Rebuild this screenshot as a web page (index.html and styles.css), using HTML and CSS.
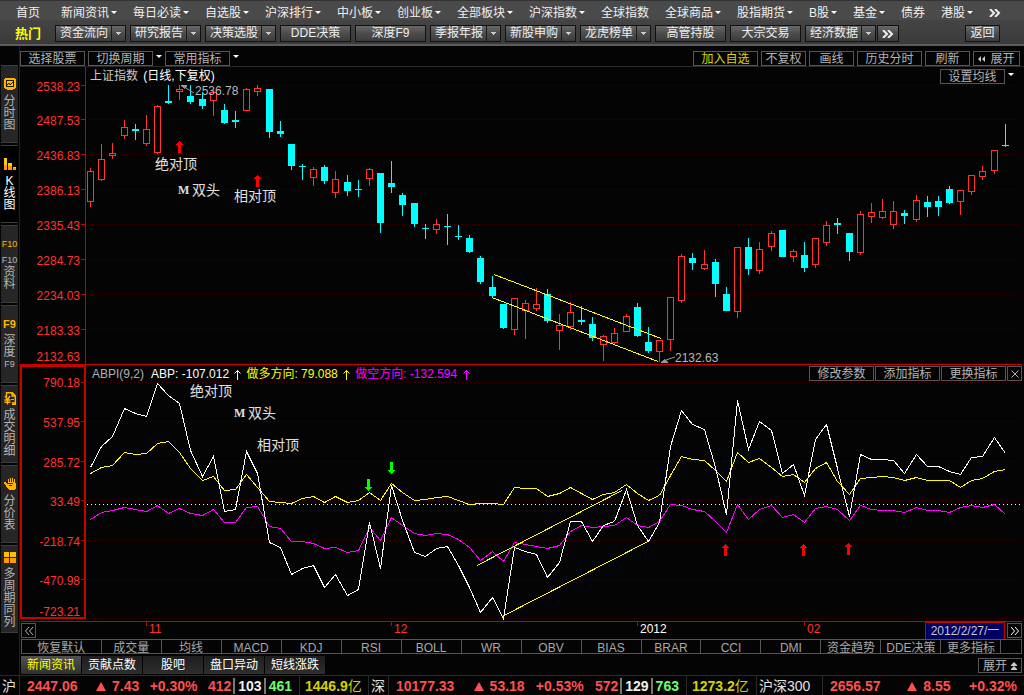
FILE: index.html
```html
<!DOCTYPE html>
<html lang="zh-CN">
<head>
<meta charset="utf-8">
<meta name="viewport" content="width=device-width, initial-scale=1">
<title>上证指数 K线图</title>
<link rel="stylesheet" href="styles.css">
</head>
<body>
<nav class="menu" aria-label="主菜单">
  <a class="menu-home" href="#">首页</a>
  <a class="drop" href="#">新闻资讯</a>
  <a class="drop" href="#">每日必读</a>
  <a class="drop" href="#">自选股</a>
  <a class="drop" href="#">沪深排行</a>
  <a class="drop" href="#">中小板</a>
  <a class="drop" href="#">创业板</a>
  <a class="drop" href="#">全部板块</a>
  <a class="drop" href="#">沪深指数</a>
  <a href="#">全球指数</a>
  <a class="drop" href="#">全球商品</a>
  <a class="drop" href="#">股指期货</a>
  <a class="drop" href="#">B股</a>
  <a class="drop" href="#">基金</a>
  <a href="#">债券</a>
  <a class="drop" href="#">港股</a>
  <a href="#" aria-label="更多菜单"><svg class="more" viewBox="0 0 12 8"><path d="M1 0l4 4-4 4M6 0l4 4-4 4"/></svg></a>
</nav>

<div class="hot">
  <strong class="hot-title">热门</strong>
  <button class="hot-btn split">资金流向</button>
  <button class="hot-btn split">研究报告</button>
  <button class="hot-btn split">决策选股</button>
  <button class="hot-btn">DDE决策</button>
  <button class="hot-btn">深度F9</button>
  <button class="hot-btn split">季报年报</button>
  <button class="hot-btn split">新股申购</button>
  <button class="hot-btn split">龙虎榜单</button>
  <button class="hot-btn">高管持股</button>
  <button class="hot-btn">大宗交易</button>
  <span class="hot-group">
    <button class="hot-btn split">经济数据</button>
    <button class="hot-btn hot-small" aria-label="更多"><svg class="more" viewBox="0 0 12 8"><path d="M1 0l4 4-4 4M6 0l4 4-4 4"/></svg></button>
  </span>
  <button class="hot-btn hot-back">返回</button>
</div>

<div class="body">
  <nav class="side" aria-label="视图">
    <a href="#" class="side-item">
      <svg class="ico" viewBox="0 0 12 13"><path fill="#ffb400" d="M1 0h10v1h1v9h-1v1H9v1H3v-1H1v-1H0V1h1z"/><path fill="#221800" d="M2 2h8v7H2z"/><path fill="#ffc400" d="M3 3h6v5H3z"/><path d="M3 7l2-2 1 2 3-3" fill="none" stroke="#221800"/></svg>
      <span>分时图</span>
    </a>
    <a href="#" class="side-item active" aria-current="page">
      <svg class="ico" viewBox="0 0 12 13"><path fill="#ffc800" d="M0 0h3v7H0zM4 5h4v3H4zM9 9h3v1H9z"/><path fill="#ff9600" d="M0 7h3v5H0zM4 8h4v4H4zM9 10h3v2H9z"/></svg>
      <span>K线图</span>
    </a>
    <a href="#" class="side-item">
      <b class="glyph f10">F10</b>
      <span><i>F10</i>资料</span>
    </a>
    <a href="#" class="side-item">
      <b class="glyph">F9</b>
      <span>深度<i>F9</i></span>
    </a>
    <a href="#" class="side-item">
      <svg class="ico" viewBox="0 0 12 13"><path fill="none" stroke="#ffb400" stroke-width="1.4" d="M2.5 5V.7h5.8l3 3v8.6H8M8 1v3h3M1 4l2.5 3.5L6 4M3.5 7v5.5M.5 8h6M.5 10.3h6"/><path fill="#ff9a00" d="M7 7h3v1H7zM8 10h3v2H8z"/></svg>
      <span>成交明细</span>
    </a>
    <a href="#" class="side-item">
      <svg class="ico" viewBox="0 0 12 13"><path fill="#ffb000" d="M4 1h1v3h1V0h1v4h1V0h1v4h1V1h1v4h1v6h-1v1H5v-1H4v-1H3V9H2V7H1V6H0V4h2v1h1v1h1z"/><path fill="#4a2a00" d="M4 5h5v1H4zM5 7h3v1H5z"/></svg>
      <span>分价表</span>
    </a>
    <a href="#" class="side-item side-tall">
      <svg class="ico" viewBox="0 0 12 13"><path fill="#ffc000" d="M0 1h5v5H0zM6 1h6v5H6z"/><path fill="#ff9a00" d="M0 7h5v5H0zM6 7h6v5H6z"/></svg>
      <span>多周期同列</span>
    </a>
  </nav>

  <main class="main">
    <div class="tools">
      <button class="box w4">选择股票</button>
      <button class="box w4">切换周期</button><i class="caret"></i>
      <button class="box w4">常用指标</button><i class="caret"></i>
      <span class="tools-right">
        <button class="box w4 yellow">加入自选</button>
        <button class="box w2">不复权</button>
        <button class="box w2">画线</button>
        <button class="box w4">历史分时</button>
        <button class="box w2">刷新</button>
        <button class="box w3"><svg class="rew" viewBox="0 0 8 6"><path d="M3 0v6L0 3zM7 0v6L4 3z"/></svg>展开</button>
      </span>
    </div>

    <section class="panel price">
      <svg id="price" class="plot" viewBox="20 67 1004 298" role="img" aria-label="上证指数日线"></svg>
      <h1 class="title">上证指数 <span>(日线,下复权)</span></h1>
      <div class="panel-tools price-tools"><button class="box w4">设置均线</button><i class="caret"></i></div>
    </section>

    <section class="panel indicator">
      <svg id="indicator" class="plot" viewBox="20 365 1004 257" role="img" aria-label="ABPI 指标"></svg>
      <div class="legend"><span class="grey">ABPI(9,2)</span><span class="white">ABP: -107.012 <svg class="up" viewBox="0 0 7 11"><path d="M3.500 11V1M.5 4.500l3-3 3 3"/></svg></span><span class="lemon">做多方向: 79.088 <svg class="up" viewBox="0 0 7 11"><path d="M3.500 11V1M.5 4.500l3-3 3 3"/></svg></span><span class="pink">做空方向: -132.594 <svg class="up" viewBox="0 0 7 11"><path d="M3.500 11V1M.5 4.500l3-3 3 3"/></svg></span></div>
      <div class="panel-tools">
        <button class="box w4">修改参数</button>
        <button class="box w4">添加指标</button>
        <button class="box w4">更换指标</button>
        <button class="box w1" aria-label="关闭"><svg class="tiny" viewBox="0 0 8 8"><path d="M.5.5l7 7M7.500.5l-7 7"/></svg></button>
      </div>
    </section>

    <div class="timeline">
      <button class="box w1" aria-label="向前"><svg class="tiny" viewBox="0 0 8 8"><path d="M4 0L.5 4 4 8M8 0L4.500 4 8 8"/></svg></button>
      <svg id="dates" class="dates" viewBox="36 621 889 18" role="img" aria-label="日期"></svg>
      <time class="date" datetime="2012-02-27">2012/2/27/一</time>
      <button class="box w1 bright" aria-label="向后"><svg class="tiny" viewBox="0 0 8 8"><path d="M0 0l3.500 4L0 8M4 0l3.500 4L4 8"/></svg></button>
    </div>

    <div class="ind-tabs">
      <button class="first">恢复默认</button><button>成交量</button><button>均线</button><button>MACD</button><button>KDJ</button><button>RSI</button><button>BOLL</button><button>WR</button><button>OBV</button><button>BIAS</button><button>BRAR</button><button>CCI</button><button>DMI</button><button>资金趋势</button><button>DDE决策</button><button>更多指标</button>
    </div>

    <div class="news">
      <button class="tab on">新闻资讯</button>
      <button class="tab">贡献点数</button>
      <button class="tab">股吧</button>
      <button class="tab">盘口异动</button>
      <button class="tab">短线涨跌</button>
      <button class="box expand">展开<svg class="dbl" viewBox="0 0 6 8"><path d="M3 0l3 3H0zM3 4l3 3H0zM0 3h6v1H0zM0 7h6v1H0z"/></svg></button>
    </div>
  </main>
</div>

<footer class="status">
  <span class="name">沪</span>
  <span class="quote"><b class="wide">2447.06</b><b><i class="tri"></i>7.43</b><b>+0.30%</b><span class="counts"><b>412</b><b class="flat">103</b><b class="down">461</b></span></span>
  <span class="amount"><b>1446.9</b>亿</span>
  <span class="name">深</span>
  <span class="quote"><b class="wide">10177.33</b><b><i class="tri"></i>53.18</b><b>+0.53%</b><span class="counts"><b>572</b><b class="flat">129</b><b class="down">763</b></span></span>
  <span class="amount"><b>1273.2</b>亿</span>
  <span class="name">沪深300</span>
  <span class="quote"><b class="wide">2656.57</b><b><i class="tri"></i>8.55</b><b>+0.32%</b></span>
</footer>
<script src="chart.js"></script>
</body>
</html>
```

FILE: styles.css
```css
* { box-sizing: border-box; }

body {
  margin: 0;
  min-height: 100vh;
  display: flex;
  flex-direction: column;
  background: #040404;
  color: #c8c8c8;
  font: 12px/14px "Liberation Sans", "Noto Sans CJK SC", sans-serif;
}

a { color: inherit; text-decoration: none; }
i { font-style: normal; }

button {
  margin: 0;
  padding: 0;
  border: 0;
  background: none;
  color: inherit;
  font: inherit;
  white-space: nowrap;
  cursor: pointer;
}

/* top menu */
.menu {
  flex: none;
  display: flex;
  justify-content: space-between;
  align-items: center;
  height: 20px;
  padding: 4px 23px 0 16px;
  background: #4a4a4a;
  border-top: 1px solid #333;
  color: #f0f0f0;
  white-space: nowrap;
}
.menu-home { padding-right: 5px; }
.menu a.drop::after {
  content: "";
  display: inline-block;
  margin-left: 2px;
  vertical-align: 3px;
  border: 3px solid transparent;
  border-top-color: #fff;
  border-bottom: 0;
}
.more {
  display: inline-block;
  width: 12px;
  height: 8px;
  fill: none;
  stroke: #eee;
  stroke-width: 2;
}

/* shortcut bar */
.hot {
  flex: none;
  display: flex;
  align-items: center;
  gap: 4px;
  height: 26px;
  padding: 4px 24px 1px 15px;
  background: linear-gradient(#444, #3a3a3a);
  border-bottom: 2px solid #5c5c5c;
  color: #eee;
}
.hot-title { width: 36px; font-size: 13px; color: #ff0; }
.hot-btn {
  flex: none;
  display: flex;
  justify-content: center;
  width: 71px;
  height: 17px;
  border: 1px solid #111;
  background: linear-gradient(#686868, #4c4c4c 50%, #3c3c3c);
  line-height: 15px;
}
.hot-btn.split { justify-content: space-between; padding-left: 4px; }
.hot-btn.split::after {
  content: "";
  width: 13px;
  height: 15px;
  border-left: 1px solid #1c1c1c;
  background: linear-gradient(#ccc, #ccc) 4px 6px / 5px 1px no-repeat, linear-gradient(#ccc, #ccc) 5px 7px / 3px 1px no-repeat, linear-gradient(#ccc, #ccc) 6px 8px / 1px 1px no-repeat;
}
.hot-group { display: flex; gap: 1px; }
.hot-btn.hot-small { width: 22px; align-items: center; }
.hot-btn.hot-back { width: 35px; margin-left: auto; }

/* work area */
.body { flex: 1; display: flex; }

.side {
  flex: none;
  width: 20px;
  padding-top: 19px;
  border-right: 1px solid #222;
  display: flex;
  flex-direction: column;
  gap: 2px;
}
.side-item {
  display: flex;
  flex-direction: column;
  align-items: center;
  justify-content: center;
  gap: 4px;
  height: 78px;
  margin: 0 1px;
  border-top: 1px solid #3c3c3c;
  border-bottom: 1px solid #3c3c3c;
  background: #262626;
  color: #b4b4b4;
  line-height: 12px;
}
.side-tall { height: 88px; }
.side-item.active { background: #000; color: #fff; }
.side-item span { width: 14px; text-align: center; word-break: break-all; }
.side-item span i { display: block; font-size: 9px; line-height: 12px; margin: 0 -2px; word-break: normal; }
.ico { width: 12px; height: 13px; }
.glyph { font-size: 11px; color: #ffb400; }
.glyph.f10 { font-size: 9px; font-weight: 400; }

.main { flex: 1; min-width: 0; display: flex; flex-direction: column; }

/* outlined buttons */
.box {
  flex: none;
  display: inline-flex;
  justify-content: center;
  align-items: center;
  height: 15px;
  padding-top: 1px;
  border: 1px solid #555;
  background: #040404;
  color: #b4b4b4;
  line-height: 14px;
}
.w1 { width: 15px; padding-top: 0; }
.w2 { width: 45px; }
.w3 { width: 47px; }
.w4 { width: 65px; }
.yellow { color: #d8d800; }
.bright { color: #fff; }
.caret {
  align-self: flex-start;
  margin-top: 4px;
  border: 3px solid transparent;
  border-top-color: #fff;
  border-bottom: 0;
}
.tiny { width: 8px; height: 8px; fill: none; stroke: currentColor; }
.rew { width: 8px; height: 6px; margin-right: 4px; fill: #c8c8c8; }

.tools {
  flex: none;
  display: flex;
  align-items: center;
  gap: 3px;
  height: 21px;
  padding: 5px 4px 0 0;
  border-bottom: 1px solid #2a2a2a;
}
.tools-right { margin-left: auto; display: flex; gap: 3px; }

/* charts */
.panel { position: relative; min-height: 0; }
.price { flex: 298 1 0; }
.indicator { flex: 257 1 0; }
.plot { position: absolute; inset: 0; width: 100%; height: 100%; }
.title {
  position: absolute;
  top: 2px;
  left: 70px;
  margin: 0;
  font-size: 12px;
  font-weight: 400;
}
.title span { color: #fff; margin-left: 2px; }
.panel-tools { position: absolute; top: 1px; right: 2px; display: flex; gap: 1px; }
.price-tools { top: 2px; right: 10px; gap: 3px; }
.legend { position: absolute; top: 2px; left: 72px; display: flex; gap: 5px; white-space: nowrap; }
.grey { color: #b0b0b0; margin-right: 2px; }
.white { color: #fff; }
.lemon { color: #ff0; }
.pink { color: #f0f; }
.up { width: 7px; height: 11px; margin-left: 2px; vertical-align: -2px; fill: none; stroke: currentColor; }

.grid { stroke: #4c0000; stroke-dasharray: 1 3; shape-rendering: crispEdges; }
.zero { stroke: #fff; stroke-dasharray: 1 3; shape-rendering: crispEdges; }
.axis { fill: none; stroke: #c80000; shape-rendering: crispEdges; }
.frame { fill: none; stroke: #c80000; stroke-width: 2; shape-rendering: crispEdges; }
.scale { fill: #ff3232; font-size: 12px; text-anchor: end; }
.rise { fill: #040404; stroke: #ff3232; shape-rendering: crispEdges; }
.fall { fill: #0ff; shape-rendering: crispEdges; }
.line { fill: none; stroke-width: 1; shape-rendering: crispEdges; }
.line-abp { stroke: #fff; }
.line-long, .trend { stroke: #ff0; }
.line-short { stroke: #f0f; }
.note { fill: #e0e0e0; font-size: 14px; }
.note-m { font-family: "Liberation Serif", serif; font-size: 12px; font-weight: 700; }
.peak { fill: #b8b8b8; font-size: 12px; }
.pointer { fill: #999; stroke: #999; }
.buy { fill: #f00; shape-rendering: crispEdges; }
.sell { fill: #0f0; shape-rendering: crispEdges; }

/* date scale */
.timeline { flex: none; display: flex; align-items: center; height: 17px; padding: 0 2px 0 1px; }
.dates { flex: 1; min-width: 0; height: 18px; margin-top: -1px; }
.month { fill: #ff3232; font-size: 12px; }
.year { fill: #fff; }
.date {
  flex: none;
  width: 80px;
  height: 17px;
  margin-right: 2px;
  border: 1px solid #c80000;
  border-bottom: 0;
  background: #000064;
  line-height: 16px;
  text-align: center;
}

.ind-tabs {
  flex: none;
  display: flex;
  height: 15px;
  margin: 0 2px 0 1px;
  border: 1px solid #555;
}
.ind-tabs button {
  flex: 60 1 0;
  min-width: 0;
  padding-top: 1px;
  border-right: 1px solid #555;
  color: #a8a8a8;
  line-height: 14px;
}
.ind-tabs .first { flex-grow: 80; }
.ind-tabs::after { content: ""; flex: 20 1 0; }

.news { flex: none; display: flex; align-items: center; gap: 1px; height: 21px; padding: 1px 2px 0 1px; }
.tab { width: 60px; height: 18px; background: linear-gradient(#1e1e1e, #2e2e2e); color: #fff; line-height: 17px; }
.tab.on { background: linear-gradient(#505050, #303030); color: #ff0; }
.expand { width: 44px; margin-left: auto; gap: 4px; }
.dbl { width: 6px; height: 8px; fill: #c8c8c8; }

/* index quotes */
.status {
  flex: none;
  display: grid;
  grid-template-columns: 20fr 280fr 69fr 20fr 298fr 70fr 66fr 201fr;
  height: 20px;
  border-top: 1px solid #2a2a2a;
  color: #ff5050;
  font-size: 14px;
  line-height: 20px;
  white-space: nowrap;
}
.status > span { border-right: 1px solid #2a2a2a; }
.status > span:last-child { border-right: 0; }
.name { padding-left: 2px; color: #e0e0e0; }
.quote { display: flex; justify-content: space-between; padding: 0 7px; }
.wide { margin-right: 8px; }
.amount { padding-left: 5px; color: #d2d200; }
.counts { display: flex; }
.counts b + b { margin-left: 2px; padding-left: 3px; border-left: 2px solid #777; height: 16px; line-height: 16px; margin-top: 2px; }
.flat { color: #f0f0f0; }
.down { color: #6cff6c; }
.tri {
  display: inline-block;
  margin-right: 6px;
  border: 5px solid transparent;
  border-top: 0;
  border-bottom: 9px solid #ff5050;
}
```

FILE: chart.js
```js
// Daily bars: [x, high, body top, body bottom, low, rising]
const bars = [
  [90,168,171,202,207,1],[101,144,159,180,181,1],[112,143,153,156,159,1],[124,120,127,136,139,1],
  [135,124,129,131,140,0],[146,115,129,144,146,1],[157,105,106,153,154,1],[168,85,101,103,104,0],
  [179,85,89,92,100,1],[190,85,96,102,104,0],[202,92,99,106,109,0],[213,91,92,101,116,1],
  [224,104,110,123,124,0],[235,111,120,122,128,0],[246,88,89,111,111,1],[257,85,88,92,96,1],
  [269,89,89,132,138,0],[280,121,131,134,137,0],[291,144,144,166,170,0],[302,164,166,167,180,0],
  [313,167,169,178,186,1],[324,165,167,181,184,0],[335,171,179,193,198,1],[347,175,182,191,196,0],
  [358,180,189,190,197,0],[369,168,169,179,186,1],[380,173,173,223,233,0],[391,161,183,187,193,0],
  [402,193,195,205,216,0],[414,203,203,224,227,0],[425,224,228,229,239,0],[436,219,224,230,234,1],
  [447,214,226,227,245,0],[458,225,236,237,240,0],[469,235,238,252,253,0],[480,256,258,282,284,0],
  [492,276,287,296,298,0],[503,304,304,328,329,0],[514,298,298,330,335,1],[525,300,303,311,339,1],
  [536,288,304,309,311,1],[547,289,294,321,323,0],[559,314,325,331,350,1],[570,302,312,327,330,1],
  [581,306,320,322,325,0],[592,317,324,338,341,0],[603,335,336,345,361,1],[614,328,333,343,345,1],
  [626,314,316,332,332,1],[637,303,307,336,337,0],[648,327,342,351,353,0],[659,340,340,352,362,1],
  [670,297,297,340,351,1],[681,254,256,301,303,1],[692,253,258,263,270,0],[704,250,264,269,270,1],
  [715,259,262,284,297,0],[726,287,294,311,311,0],[737,247,247,312,318,1],[748,238,247,269,275,0],
  [759,242,249,271,274,1],[771,231,233,247,251,1],[782,230,230,257,257,0],[793,249,251,257,262,1],
  [804,242,255,268,272,0],[815,238,238,265,268,1],[826,221,225,243,246,1],[837,218,223,225,234,0],
  [849,233,233,252,261,0],[860,211,214,253,255,1],[871,203,212,217,223,1],[882,199,211,218,219,1],
  [893,201,211,225,229,1],[904,210,213,216,224,0],[916,195,200,220,222,1],[927,196,202,207,217,0],
  [938,196,201,207,216,0],[949,186,189,203,204,0],[960,190,190,202,215,1],[971,175,175,192,195,1],
  [982,166,171,177,180,1],[994,150,150,171,174,1],[1005,124,145,146,147,0]
];

const abp = [467,446,436,408,413,416,383,395,403,450,476,456,511,509,451,473,542,547,574,568,565,587,574,595,589,522,568,485,520,552,556,548,546,565,587,612,597,618,547,551,554,577,562,521,521,541,525,521,489,525,541,522,446,410,424,429,467,514,400,449,421,430,473,464,495,439,424,468,516,454,459,459,460,473,454,466,466,471,474,457,456,437,453];
const longs = [473,467,465,452,454,453,443,441,452,468,480,476,490,489,474,487,501,502,503,498,496,502,496,502,500,492,500,483,492,500,499,497,496,500,504,503,503,504,487,488,488,496,493,487,493,499,494,492,484,493,500,495,475,456,459,460,470,481,452,462,458,467,476,474,482,468,462,481,494,478,477,476,477,480,477,480,480,480,487,480,478,471,469];
const shorts = [519,512,510,507,509,511,505,513,508,513,515,509,522,522,507,506,526,528,541,541,543,548,547,552,550,527,540,517,525,533,535,533,534,539,547,560,551,561,542,544,546,548,545,531,525,527,526,525,517,525,527,521,504,505,509,511,521,532,504,519,509,505,517,514,522,508,506,509,520,505,509,510,510,512,507,510,510,512,507,505,507,504,514];

const path = (cls, d) => `<path class="${cls}" d="${d}"/>`;
const text = (cls, x, y, s) => `<text class="${cls}" x="${x}" y="${y}">${s}</text>`;
const grid = ys => path('grid', ys.map(y => `M90 ${y + 0.5}H1020`).join(''));
const ticks = ys => path('axis', ys.map(y => `M81 ${y + 0.5}h4`).join(''));
const scale = rows => rows.map(([v, y]) => text('scale', 80, y, v)).join('');
const arrow = (cls, x, y, dir) =>
  path(cls, dir > 0
    ? `M${x} ${y}h1v1h1v1h1v1h1v1h-2v8h-3v-8h-2v-1h1v-1h1v-1h1z`
    : `M${x - 1} ${y}h3v8h2v1h-1v1h-1v1h-1v1h-1v-1h-1v-1h-1v-1h-1v-1h2z`);

function candle([x, high, top, bottom, low, rising]) {
  const c = x + 0.5;
  if (rising) {
    return path('rise', `M${c} ${high}V${top}M${c} ${bottom}V${low}M${x - 2.5} ${top + 0.5}h6V${bottom - 0.5}h-6z`);
  }
  return path('fall', `M${x} ${high}h1V${low}h-1zM${x - 3} ${top}h7V${bottom}h-7z`);
}

const series = (cls, ys) =>
  `<polyline class="line ${cls}" points="${ys.map((y, i) => `${bars[i][0] + 0.5},${y + 0.5}`).join(' ')}"/>`;

const note = (x, y, s) => text('note', x, y, s);
const priceGrid = [85, 119, 154, 189, 224, 259, 294, 329];
const indicatorGrid = [382, 421, 461, 500, 540, 579];

document.getElementById('price').innerHTML =
  grid([...priceGrid, 363]) + ticks(priceGrid) +
  path('axis', 'M85.5 67V364M20 364.500H1022') +
  scale([['2538.23', 91], ['2487.53', 125], ['2436.83', 160], ['2386.13', 195], ['2335.43', 230],
    ['2284.73', 265], ['2234.03', 300], ['2183.33', 335], ['2132.63', 361]]) +
  bars.map(candle).join('') +
  path('line trend', 'M494 274.500L661 338.500M492 297.500L658 361.500') +
  path('pointer', 'M181 85.500l6 0 -2 3zM186 88l8 5') + text('peak', 195, 95, '2536.78') +
  path('pointer', 'M661 362.500l7 0 -3 -3zM666 360l9 -3') + text('peak', 675, 362, '2132.63') +
  arrow('buy', 179, 141, 1) + arrow('buy', 257, 175, 1) +
  note(155, 169, '绝对顶') + text('note note-m', 178, 194, 'M') + note(192, 195, '双头') + note(234, 201, '相对顶');

document.getElementById('indicator').innerHTML =
  grid([...indicatorGrid, 618]) + ticks(indicatorGrid) +
  path('frame', 'M21 366H85V618H21z') +
  path('axis', 'M21 621.500H1022') +
  path('zero', 'M87 504.500H1022') +
  scale([['790.18', 387], ['537.95', 427], ['285.72', 467], ['33.49', 506], ['-218.74', 546],
    ['-470.98', 585], ['-723.21', 616]]) +
  series('line-short', shorts) + series('line-long', longs) + series('line-abp', abp) +
  path('line trend', 'M477 565.500L622 490.500M502 616.500L648 541.500') +
  arrow('sell', 368, 479, -1) + arrow('sell', 391, 462, -1) +
  arrow('buy', 725, 544, 1) + arrow('buy', 803, 544, 1) + arrow('buy', 848, 543, 1) +
  note(190, 396, '绝对顶') + text('note note-m', 234, 417, 'M') + note(248, 418, '双头') + note(257, 450, '相对顶');

document.getElementById('dates').innerHTML =
  path('axis', [146, 391, 637, 804].map(x => `M${x + 0.5} 622v4`).join('')) +
  text('month', 149, 633, '11') + text('month', 394, 633, '12') +
  text('month year', 640, 633, '2012') + text('month', 807, 633, '02');
```
